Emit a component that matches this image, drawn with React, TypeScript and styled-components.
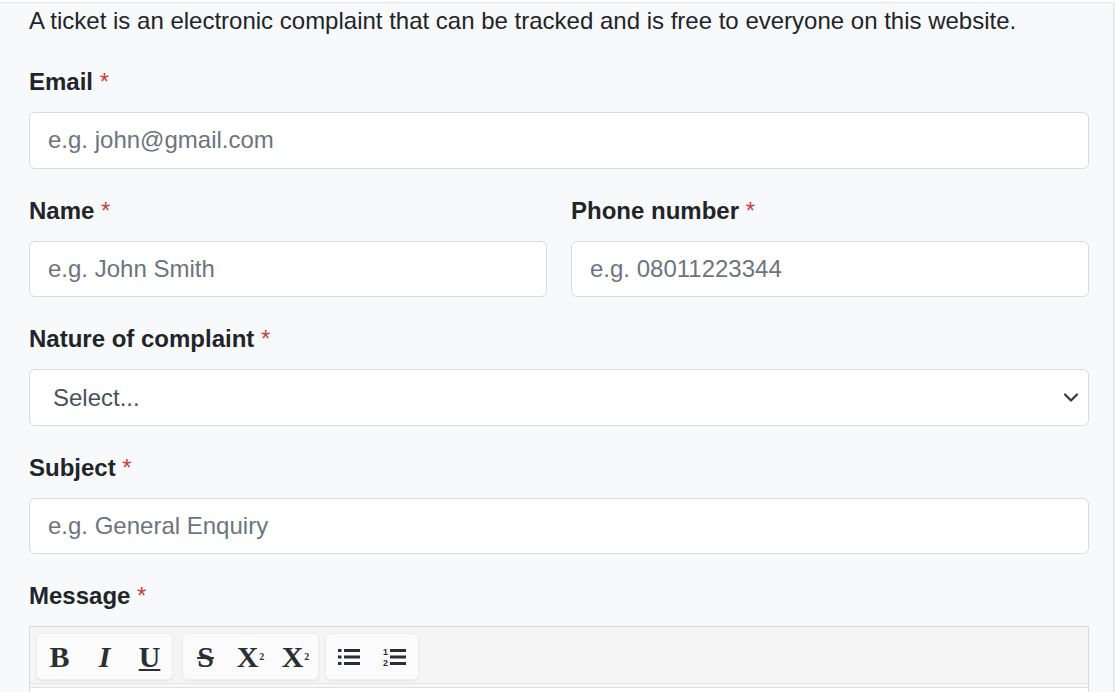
import React from "react";
import styled, { createGlobalStyle } from "styled-components";

const GlobalStyle = createGlobalStyle`
  * { box-sizing: border-box; }
  html, body { margin: 0; padding: 0; background: #ffffff; }
  body {
    font-family: "Liberation Sans", Arial, sans-serif;
    color: #212529;
    overflow: hidden;
  }
`;

const Page = styled.div`
  width: 1120px;
  height: 692px;
  padding-top: 2px;
  background: #ffffff;
`;

const Panel = styled.div`
  width: 1114px;
  height: 690px;
  background: #f8f9fa;
  border-top: 1px solid #e4e6e8;
  border-right: 1px solid #e2e4e6;
  box-shadow: 1px 0 0 #eff0f1;
  padding: 0 24px 0 29px;
  overflow: hidden;
`;

const Intro = styled.p`
  margin: 0 0 25px;
  font-size: 24px;
  line-height: 36px;
  color: #212529;
`;

const Group = styled.div`
  margin-bottom: 24px;
`;

const Row = styled.div`
  display: grid;
  grid-template-columns: 1fr 1fr;
  column-gap: 24px;
`;

const Label = styled.label`
  display: block;
  font-size: 24px;
  line-height: 36px;
  font-weight: 700;
  color: #212529;
  margin-bottom: 12px;
`;

const Required = styled.span`
  color: #cf3d42;
  font-weight: 400;
`;

const Input = styled.input`
  display: block;
  width: 100%;
  height: 56.5px;
  padding: 0 18px;
  font-family: "Liberation Sans", Arial, sans-serif;
  font-size: 24px;
  color: #495057;
  background: #ffffff;
  border: 1px solid #d7dbdf;
  border-radius: 6px;
  outline: none;
  &::placeholder { color: #6c757d; opacity: 1; }
`;

const SelectWrap = styled.div`
  position: relative;
`;

const Select = styled.select`
  display: block;
  width: 100%;
  height: 56.5px;
  padding: 0 40px 0 23px;
  font-family: "Liberation Sans", Arial, sans-serif;
  font-size: 24px;
  color: #495057;
  background: #ffffff;
  border: 1px solid #d7dbdf;
  border-radius: 6px;
  appearance: none;
  -webkit-appearance: none;
  outline: none;
`;

const Chevron = styled.svg`
  position: absolute;
  right: 6px;
  top: 50%;
  transform: translateY(-50%);
  pointer-events: none;
`;

const Editor = styled.div`
  border: 1px solid #dadada;
  border-bottom: none;
  background: #f7f7f7;
`;

const Toolbar = styled.div`
  display: flex;
  padding: 6px 6px 3px;
  background: #f5f5f5;
  border-bottom: 1px solid #e4e4e4;
`;

const BtnGroup = styled.div<{ $gap: number }>`
  display: flex;
  margin-right: ${(p) => p.$gap}px;
  background: #fbfbfb;
  border: 1px solid #eeeeee;
  border-radius: 5px;
  box-shadow: 0 1px 2px rgba(0, 0, 0, 0.07);
`;

const ToolBtn = styled.button<{ $w?: number }>`
  width: ${(p) => p.$w ?? 45}px;
  height: 45px;
  display: flex;
  align-items: center;
  justify-content: center;
  border: none;
  background: transparent;
  padding: 0;
  font-family: "Liberation Serif", "Times New Roman", serif;
  font-size: 30px;
  font-weight: 700;
  color: #2b2f33;
  line-height: 1;
`;

const Italic = styled.span`
  font-style: italic;
`;

const Under = styled.span`
  text-decoration: underline;
  text-decoration-thickness: 2px;
  text-underline-offset: 2px;
`;

const Strike = styled.span`
  text-decoration: line-through;
  text-decoration-thickness: 2px;
`;

const Script = styled.span<{ $sub?: boolean }>`
  font-size: 10px;
  vertical-align: ${(p) => (p.$sub ? "-3px" : "12px")};
  margin-left: 1px;
`;

const EditorGap = styled.div`
  height: 4px;
  background: #f7f7f7;
  border-bottom: 1px solid #e2e2e2;
`;

const EditorBody = styled.div`
  height: 40px;
  background: #ffffff;
`;

const BulletIcon = () => (
  <svg width="24" height="22" viewBox="0 0 24 22">
    <g fill="#2b2f33">
      <rect x="1" y="3" width="3.5" height="3" />
      <rect x="1" y="9.5" width="3.5" height="3" />
      <rect x="1" y="16" width="3.5" height="3" />
      <rect x="7" y="3" width="16" height="3" />
      <rect x="7" y="9.5" width="16" height="3" />
      <rect x="7" y="16" width="16" height="3" />
    </g>
  </svg>
);

const NumberIcon = () => (
  <svg width="24" height="22" viewBox="0 0 24 22">
    <g fill="#2b2f33">
      <text x="0" y="9" fontSize="9" fontFamily="Liberation Sans, Arial, sans-serif" fontWeight="700">1</text>
      <text x="0" y="20" fontSize="9" fontFamily="Liberation Sans, Arial, sans-serif" fontWeight="700">2</text>
      <rect x="7" y="3" width="16" height="3" />
      <rect x="7" y="9.5" width="16" height="3" />
      <rect x="7" y="16" width="16" height="3" />
    </g>
  </svg>
);

export default function App() {
  return (
    <>
      <GlobalStyle />
      <Page>
        <Panel>
          <Intro>
            A ticket is an electronic complaint that can be tracked and is free to everyone on this website.
          </Intro>

          <Group>
            <Label>
              Email <Required>*</Required>
            </Label>
            <Input type="email" placeholder="e.g. john@gmail.com" />
          </Group>

          <Row>
            <Group>
              <Label>
                Name <Required>*</Required>
              </Label>
              <Input type="text" placeholder="e.g. John Smith" />
            </Group>
            <Group>
              <Label>
                Phone number <Required>*</Required>
              </Label>
              <Input type="tel" placeholder="e.g. 08011223344" />
            </Group>
          </Row>

          <Group>
            <Label>
              Nature of complaint <Required>*</Required>
            </Label>
            <SelectWrap>
              <Select defaultValue="">
                <option value="">Select...</option>
              </Select>
              <Chevron width="24" height="24" viewBox="0 0 24 24">
                <path d="M6 9.5l6 6 6-6" fill="none" stroke="#343a40" strokeWidth="2.2" strokeLinecap="round" strokeLinejoin="round" />
              </Chevron>
            </SelectWrap>
          </Group>

          <Group>
            <Label>
              Subject <Required>*</Required>
            </Label>
            <Input type="text" placeholder="e.g. General Enquiry" />
          </Group>

          <Group>
            <Label>
              Message <Required>*</Required>
            </Label>
            <Editor>
              <Toolbar>
                <BtnGroup $gap={9}>
                  <ToolBtn>B</ToolBtn>
                  <ToolBtn>
                    <Italic>I</Italic>
                  </ToolBtn>
                  <ToolBtn>
                    <Under>U</Under>
                  </ToolBtn>
                </BtnGroup>
                <BtnGroup $gap={6}>
                  <ToolBtn>
                    <Strike>S</Strike>
                  </ToolBtn>
                  <ToolBtn>
                    X<Script>2</Script>
                  </ToolBtn>
                  <ToolBtn>
                    X<Script $sub>2</Script>
                  </ToolBtn>
                </BtnGroup>
                <BtnGroup $gap={0}>
                  <ToolBtn $w={46}>
                    <BulletIcon />
                  </ToolBtn>
                  <ToolBtn $w={46}>
                    <NumberIcon />
                  </ToolBtn>
                </BtnGroup>
              </Toolbar>
              <EditorGap />
              <EditorBody />
            </Editor>
          </Group>
        </Panel>
      </Page>
    </>
  );
}
